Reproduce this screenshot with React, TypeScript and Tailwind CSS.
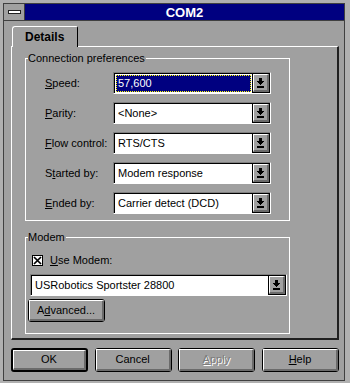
import React from "react";

function Arrow() {
  return (
    <svg width="9" height="10" viewBox="0 0 9 10" shapeRendering="crispEdges">
      <rect x="3" y="0" width="3" height="3" fill="#000" />
      <rect x="1" y="3" width="7" height="1" fill="#000" />
      <rect x="2" y="4" width="5" height="1" fill="#000" />
      <rect x="3" y="5" width="3" height="1" fill="#000" />
      <rect x="4" y="6" width="1" height="1" fill="#000" />
      <rect x="1" y="8" width="7" height="2" fill="#000" />
    </svg>
  );
}

function Combo({
  text,
  selected,
  className,
}: {
  text: string;
  selected?: boolean;
  className: string;
}) {
  return (
    <div
      className={`flex h-[22px] border border-t-[#808080] border-l-[#808080] border-b-white border-r-white ${className}`}
    >
      <div className="flex flex-1 border-t border-l border-black bg-white">
        {selected ? (
          <div className="m-[1px] flex flex-1 items-center border border-dotted border-[#ffff00] bg-[#000080] pl-[1px] text-white">
            {text}
          </div>
        ) : (
          <div className="flex flex-1 items-center pl-[3px]">{text}</div>
        )}
      </div>
      <div className="flex w-[18px] border border-black">
        <div className="flex flex-1 items-center justify-center border-t border-l border-t-white border-l-white border-r-2 border-b-2 border-r-[#6b6b6b] border-b-[#6b6b6b]">
          <Arrow />
        </div>
      </div>
    </div>
  );
}

function Btn({
  children,
  def,
  disabled,
  className = "",
}: {
  children: React.ReactNode;
  def?: boolean;
  disabled?: boolean;
  className?: string;
}) {
  return (
    <div
      className={`flex rounded-[3px] border-black ${def ? "border-2" : "border"} ${className}`}
    >
      <div
        className={`flex flex-1 items-center justify-center border-t border-l border-t-white border-l-white border-r-2 border-b-2 border-r-[#6b6b6b] border-b-[#6b6b6b] ${
          disabled ? "text-[#7c7c7c] [text-shadow:1px_1px_0_#ffffff]" : "text-black"
        }`}
      >
        {children}
      </div>
    </div>
  );
}

function Row({ label, children }: { label: React.ReactNode; children: React.ReactNode }) {
  return (
    <div className="flex h-[22px] items-center">
      <div className="w-[68px]">{label}</div>
      {children}
    </div>
  );
}

export default function App() {
  return (
    <div className="h-[383px] w-[350px] bg-[#b0b0b0] pl-[3px] pt-[3px] font-['Liberation_Sans',Arial,sans-serif] text-[11px] leading-[13px] text-black">
      <div className="flex h-[378px] w-[342px] flex-col border border-[#404040] bg-[#a0a0a0]">
        {/* title bar */}
        <div className="flex h-[17px] border-b border-[#404040]">
          <div className="flex w-[21px] items-center justify-center border-r border-[#404040] bg-[#a0a0a0]">
            <div className="h-[4px] w-[13px] border border-[#202020] bg-white" />
          </div>
          <div className="flex flex-1 items-center justify-center bg-[#000080] text-[13px] font-bold text-white">
            COM2
          </div>
        </div>

        {/* body */}
        <div className="flex flex-col pl-[7px] pt-[5px]">
          {/* tab */}
          <div className="relative z-10 -mb-px ml-[1px] flex h-[21px] w-[66px] items-center rounded-tl-[3px] rounded-tr-[2px] border-t border-l border-r border-t-white border-l-white border-r-black bg-[#a0a0a0] pl-[12px] pt-[1px] text-[12px] font-bold">
            Details
          </div>

          {/* panel */}
          <div className="flex h-[294px] w-[328px] flex-col border-t border-l border-t-white border-l-white border-r-2 border-b-2 border-r-[#202020] border-b-[#202020] pl-[13px] pt-[11px]">
            {/* connection preferences */}
            <div className="relative flex h-[163px] w-[265px] flex-col gap-[8px] border border-white pl-[19px] pt-[13px]">
              <div className="absolute left-[2px] top-[-7px] bg-[#a0a0a0] pr-[1px]">
                Connection preferences
              </div>
              <Row label={<><u>S</u>peed:</>}>
                <Combo text="57,600" selected className="w-[158px]" />
              </Row>
              <Row label={<><u>P</u>arity:</>}>
                <Combo text="<None>" className="w-[158px]" />
              </Row>
              <Row label={<><u>F</u>low control:</>}>
                <Combo text="RTS/CTS" className="w-[158px]" />
              </Row>
              <Row label={<>S<u>t</u>arted by:</>}>
                <Combo text="Modem response" className="w-[158px]" />
              </Row>
              <Row label={<><u>E</u>nded by:</>}>
                <Combo text="Carrier detect (DCD)" className="w-[158px]" />
              </Row>
            </div>

            {/* modem */}
            <div className="relative mt-[16px] flex h-[97px] w-[265px] flex-col border border-white">
              <div className="absolute left-[2px] top-[-7px] bg-[#a0a0a0] pr-[1px]">Modem</div>
              <div className="ml-[6px] mt-[16px] flex h-[13px] items-center gap-[7px]">
                <div className="flex h-[11px] w-[11px] items-center justify-center border border-black bg-white">
                  <svg width="9" height="9" viewBox="0 0 9 9">
                    <path d="M1 1 L8 8 M8 1 L1 8" stroke="#000" strokeWidth="1.7" />
                  </svg>
                </div>
                <span>
                  <u>U</u>se Modem:
                </span>
              </div>
              <Combo text="USRobotics Sportster 28800" className="ml-[4px] mt-[7px] w-[257px]" />
              <Btn className="ml-[2px] mt-[3px] h-[23px] w-[77px]">
                <span>
                  A<u>d</u>vanced...
                </span>
              </Btn>
            </div>
          </div>

          {/* bottom buttons */}
          <div className="mt-[8px] flex w-[328px] justify-between">
            <Btn def className="h-[24px] w-[77px]">
              OK
            </Btn>
            <Btn className="h-[24px] w-[77px]">Cancel</Btn>
            <Btn disabled className="h-[24px] w-[77px]">
              <span>
                <u>A</u>pply
              </span>
            </Btn>
            <Btn className="h-[24px] w-[77px]">
              <span>
                <u>H</u>elp
              </span>
            </Btn>
          </div>
        </div>
      </div>
    </div>
  );
}
